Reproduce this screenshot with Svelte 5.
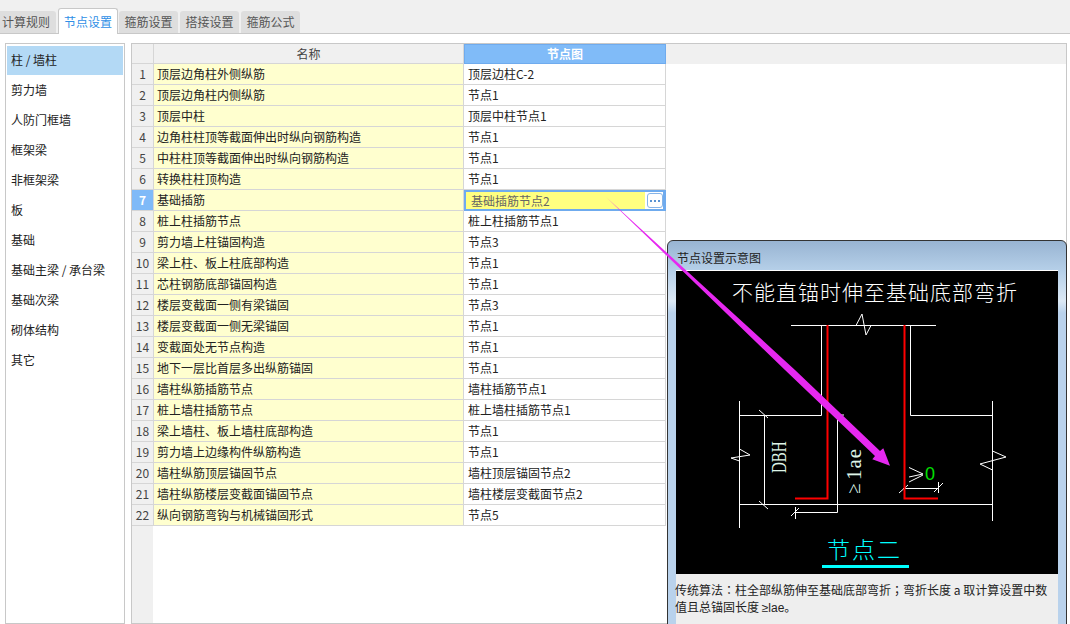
<script>
  const tabs = ["计算规则", "节点设置", "箍筋设置", "搭接设置", "箍筋公式"];
  const menu = ["柱 / 墙柱", "剪力墙", "人防门框墙", "框架梁", "非框架梁", "板", "基础", "基础主梁 / 承台梁", "基础次梁", "砌体结构", "其它"];
  const rows = [
    ["顶层边角柱外侧纵筋", "顶层边柱C-2"],
    ["顶层边角柱内侧纵筋", "节点1"],
    ["顶层中柱", "顶层中柱节点1"],
    ["边角柱柱顶等截面伸出时纵向钢筋构造", "节点1"],
    ["中柱柱顶等截面伸出时纵向钢筋构造", "节点1"],
    ["转换柱柱顶构造", "节点1"],
    ["基础插筋", "基础插筋节点2"],
    ["桩上柱插筋节点", "桩上柱插筋节点1"],
    ["剪力墙上柱锚固构造", "节点3"],
    ["梁上柱、板上柱底部构造", "节点1"],
    ["芯柱钢筋底部锚固构造", "节点1"],
    ["楼层变截面一侧有梁锚固", "节点3"],
    ["楼层变截面一侧无梁锚固", "节点1"],
    ["变截面处无节点构造", "节点1"],
    ["地下一层比首层多出纵筋锚固", "节点1"],
    ["墙柱纵筋插筋节点", "墙柱插筋节点1"],
    ["桩上墙柱插筋节点", "桩上墙柱插筋节点1"],
    ["梁上墙柱、板上墙柱底部构造", "节点1"],
    ["剪力墙上边缘构件纵筋构造", "节点1"],
    ["墙柱纵筋顶层锚固节点", "墙柱顶层锚固节点2"],
    ["墙柱纵筋楼层变截面锚固节点", "墙柱楼层变截面节点2"],
    ["纵向钢筋弯钩与机械锚固形式", "节点5"]
  ];
  const selected = 6;
</script>

<div class="page">
  <div class="tabs">
    {#each tabs as tab, i}
      <div class="tab" class:tab--active={i === 1}>{tab}</div>
    {/each}
  </div>

  <div class="content">
    <ul class="menu">
      {#each menu as item, i}
        <li class:menu--active={i === 0}>{item}</li>
      {/each}
    </ul>

    <div class="grid">
      <div class="row row--head">
        <div class="idx"></div>
        <div class="name name--head">名称</div>
        <div class="node node--head">节点图</div>
      </div>
      {#each rows as row, i}
        <div class="row">
          <div class="idx" class:idx--active={i === selected}>{i + 1}</div>
          <div class="name">{row[0]}</div>
          {#if i === selected}
            <div class="node node--active">
              <span class="node__text">{row[1]}</span>
              <span class="more"><i></i><i></i><i></i></span>
            </div>
          {:else}
            <div class="node">{row[1]}</div>
          {/if}
        </div>
      {/each}
    </div>
  </div>

  <div class="window">
    <div class="window__title">节点设置示意图</div>
    <div class="window__body">
      <svg class="diagram" viewBox="676 271 382 303" width="382" height="303">
        <text x="732" y="300" class="d-title">不能直锚时伸至基础底部弯折</text>
        <g fill="none" stroke="#fff" stroke-width="1">
          <path d="M791 325.5H936" />
          <path d="M856 325.500L862 314L866 335L871 325.500" />
          <path d="M821.500 325V415.500H739M910.500 325V415.500H992.500" />
          <path d="M739.500 401V528M992.500 401V521" />
          <path d="M739.500 449L750 455L731 458L739.500 461" />
          <path d="M992.500 451L1006 457L980 464L992.500 470" />
          <path d="M739 504.500H992.500" />
          <path d="M764.500 415V504" />
          <path d="M759 410L768 418M759 501L768 509" />
          <path d="M837.500 415V512.500H795" />
          <path d="M837 415H844" />
          <path d="M795.500 507V519M791 516L799 508" />
          <path d="M909 467.500L923 474L909 477M909 482L923 475" />
          <path d="M903 488.500H938M938.500 482V493" />
          <path d="M899 493L908 485M934 492L943 483" />
        </g>
        <path d="M827.500 325V498.500H795M904.500 325V498.500H938" fill="none" stroke="#f00" stroke-width="2" />
        <text class="d-dim" transform="translate(786 473) rotate(-90) scale(1 1.35)" x="0" y="0">DBH</text>
        <text class="d-dim d-dim--ge" transform="translate(860 494) rotate(-90)" x="0" y="0">≥</text>
        <text class="d-dim d-dim--lae" transform="translate(861 480) rotate(-90)" x="0" y="0">1ae</text>
        <text class="d-zero" x="925" y="480">0</text>
        <text class="d-node" x="827" y="558">节点二</text>
        <rect x="822" y="565" width="87" height="3" fill="#0ff" />
      </svg>
      <p class="window__note">
        <span class="line">传统算法<span class="punct">：</span>柱全部纵筋伸至基础底部弯折<span class="punct">；</span>弯折长度 a 取计算设置中数</span>
        <span class="line">值且总锚固长度 <span class="latin">≥lae</span>。</span>
      </p>
    </div>
  </div>

  <svg class="arrow" viewBox="0 0 1070 624" width="1070" height="624">
    <path d="M606 197L795 370L880 451L883.300 448.300L890 465.700L872.300 459.300L875 456L785 370Z" fill="#e628f0" />
  </svg>
</div>

<style>
  :global(body) {
    margin: 0;
    background: #f0f0f0;
  }

  .page {
    position: relative;
    width: 1070px;
    height: 624px;
    overflow: hidden;
    font-family: "Noto Sans CJK SC", "Liberation Sans", sans-serif;
    font-size: 12px;
    color: #222;
    display: flex;
    flex-direction: column;
  }

  .tabs {
    display: flex;
    align-items: flex-end;
    gap: 2px;
    height: 33px;
    box-sizing: border-box;
  }

  .tab {
    width: 59px;
    height: 22px;
    line-height: 22px;
    text-align: center;
    color: #555;
    background: #dedede;
    border-radius: 3px 3px 0 0;
    box-sizing: border-box;
  }

  .tab:first-child {
    width: 56px;
    text-align: left;
    padding-left: 2px;
    border-radius: 0 3px 0 0;
  }

  .tab--active {
    width: 60px;
    height: 26px;
    line-height: 26px;
    margin-bottom: -1px;
    margin-right: -1px;
    color: #2f8fe6;
    background: #fff;
    border: 1px solid #c8c8c8;
    border-bottom: 0;
    position: relative;
    z-index: 1;
  }

  .content {
    flex: 1;
    min-height: 0;
    display: flex;
    gap: 6px;
    padding: 9px 3px 0 5px;
    background: #fff;
    border-top: 1px solid #c8c8c8;
  }

  .menu {
    width: 120px;
    margin: 0;
    padding: 1px;
    list-style: none;
    border: 1px solid #c8c8c8;
    box-sizing: border-box;
    flex: none;
  }

  .menu li {
    height: 30px;
    line-height: 29px;
    padding-left: 4px;
  }

  .menu li.menu--active {
    height: 29px;
    margin-top: 1px;
    line-height: 28px;
    background: #b3d9f5;
  }

  .grid {
    flex: 1;
    border: 1px solid #c8c8c8;
    background: linear-gradient(to right, #f0f0f0 21px, #fff 21px);
  }

  .row {
    display: flex;
    height: 21px;
    line-height: 20px;
    box-sizing: border-box;
  }

  .row--head {
    height: 20px;
    background: #f0f0f0;
  }

  .idx {
    width: 22px;
    flex: none;
    box-sizing: border-box;
    text-align: center;
    color: #444;
    background: #f0f0f0;
    border-right: 1px solid #d6d6d6;
    border-bottom: 1px solid #d6d6d6;
  }

  .idx--active {
    background: #7fbaf8;
    color: #fff;
    font-weight: 700;
  }

  .name {
    width: 310px;
    flex: none;
    box-sizing: border-box;
    padding-left: 3px;
    background: #ffffcf;
    border-right: 1px solid #d6d6d6;
    border-bottom: 1px solid #d6d6d6;
  }

  .name--head {
    background: #f0f0f0;
    text-align: center;
    color: #444;
    padding: 0;
  }

  .node {
    width: 202px;
    flex: none;
    box-sizing: border-box;
    padding-left: 4px;
    background: #fff;
    border-right: 1px solid #d6d6d6;
    border-bottom: 1px solid #d6d6d6;
  }

  .node--head {
    background: #80bbf8;
    border: 1px solid #6fabee;
    color: #fff;
    font-weight: 700;
    text-align: center;
    padding: 0;
    line-height: 18px;
  }

  .node--active {
    display: flex;
    justify-content: space-between;
    align-items: center;
    padding: 0 0 0 5px;
    background: linear-gradient(to right, #ffff80 179px, #fff 179px);
    border: 2px solid #6fabee;
    border-right-width: 3px;
    color: #666;
    height: 21px;
  }

  .node__text {
    line-height: 17px;
  }

  .more {
    display: flex;
    align-items: center;
    justify-content: center;
    gap: 2px;
    width: 16px;
    height: 15px;
    box-sizing: border-box;
    background: #fff;
    border: 1px solid #86b4e8;
    border-radius: 3px;
  }

  .more i {
    width: 2px;
    height: 2px;
    background: #5a93d2;
  }

  .window {
    position: absolute;
    left: 667px;
    top: 240px;
    width: 400px;
    height: 400px;
    box-sizing: border-box;
    padding: 0 8px;
    border: 1px solid #333;
    border-radius: 6px 6px 0 0;
    background: linear-gradient(to bottom, #98b4d2 0, #b6d0e9 30px, #dce9f5 60px, #b9d2ec 72px, #b9d2ec 100%);
  }

  .window__title {
    height: 29px;
    line-height: 33px;
    padding-left: 1px;
    color: #222;
  }

  .window__body {
    background: #eee;
    height: 360px;
    border-top: 1px solid #fff;
  }

  .diagram {
    display: block;
    background: #000;
  }

  .d-title {
    fill: #fff;
    font-size: 21px;
    font-weight: 300;
    letter-spacing: 1px;
  }

  .d-dim {
    fill: #dff5e8;
    font-family: "Liberation Serif", serif;
    font-size: 15px;
  }

  .d-dim--ge {
    font-size: 19px;
  }

  .d-dim--lae {
    font-size: 21px;
    letter-spacing: 1px;
  }

  .d-zero {
    fill: #00e000;
    font-family: "Liberation Sans", sans-serif;
    font-size: 18px;
  }

  .d-node {
    fill: #0ff;
    font-size: 23px;
    font-weight: 300;
    letter-spacing: 2px;
  }

  .window__note {
    margin: 0 0 0 -1px;
    padding-top: 7px;
    line-height: 17px;
    color: #222;
    width: 378px;
  }

  .line {
    display: block;
    white-space: nowrap;
  }

  .punct {
    font-family: "Noto Sans CJK TC", sans-serif;
  }

  .latin {
    font-family: "Liberation Sans", sans-serif;
  }

  .arrow {
    position: absolute;
    left: 0;
    top: 0;
    pointer-events: none;
  }
</style>
